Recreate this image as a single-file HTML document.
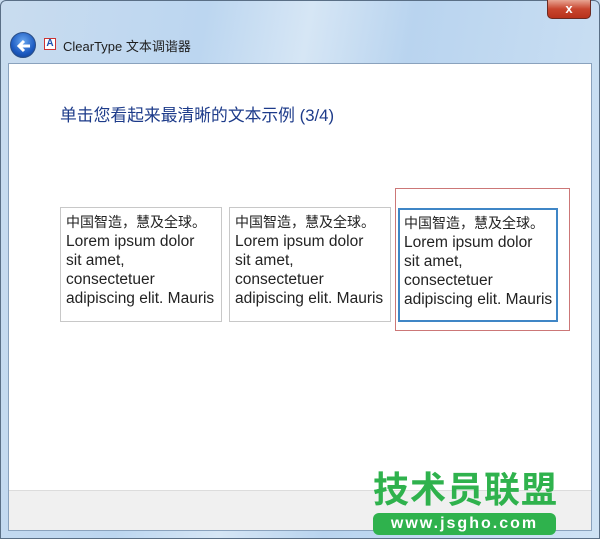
<!DOCTYPE html>
<html><head><meta charset="utf-8"><style>
*{margin:0;padding:0;box-sizing:border-box}
body{width:600px;height:539px;overflow:hidden;position:relative;font-family:"Liberation Sans","Noto Sans CJK SC",sans-serif;background:linear-gradient(100deg,#c9dcef 0%,#bcd6f0 30%,#d6e6f5 45%,#b9d4ef 60%,#cfe2f4 100%)}
.frame{position:absolute;left:0;top:0;width:600px;height:539px;border:1px solid #5a6f86;border-radius:6px 6px 0 0}
.close{position:absolute;left:547px;top:0;width:44px;height:19px;background:linear-gradient(#e8a593,#c8452e 50%,#b8321c);border:1px solid #6b2a22;border-top:none;border-radius:0 0 5px 5px;color:#fff;font-weight:bold;font-size:13px;text-align:center;line-height:18px}
.back{position:absolute;left:10px;top:32px;width:26px;height:26px;border-radius:50%;background:radial-gradient(circle at 50% 35%,#6aa8f0,#1d5bc2 60%,#0c3a8a);border:1px solid #2a4e86}
.back svg{position:absolute;left:4px;top:4px}
.ico{position:absolute;left:44px;top:38px;width:12px;height:12px;background:#fff;border:1px solid #c33;font-size:10px;line-height:10px;text-align:center;color:#1a4fb0;font-weight:bold}
.title{position:absolute;left:63px;top:36px;font-size:13px;color:#1e1e1e}
.content{position:absolute;left:8px;top:63px;width:584px;height:468px;background:#fff;border:1px solid #8aa2bd}
.bar{position:absolute;left:0;right:0;bottom:0;height:40px;background:#f0f0f0;border-top:1px solid #dcdcdc}
h1{position:absolute;left:51px;top:38px;font-size:16.8px;font-weight:normal;color:#1d3b8a;white-space:nowrap}
.box{position:absolute;top:143px;width:162px;height:115px;border:1px solid #c8c8c8;padding:5px 5px;font-size:15.5px;line-height:19px;color:#222;white-space:nowrap}
.sel{position:absolute;left:386px;top:124px;width:175px;height:143px;border:1px solid #c77}
.box.s{border:2px solid #3f86c6;padding:4px 4px}
.wm{position:absolute;left:373px;top:470px;font-size:36px;font-weight:bold;color:#2fb24d;letter-spacing:1px;line-height:40px}
.wm2{position:absolute;left:373px;top:513px;width:183px;height:22px;background:#2fb24d;border-radius:6px;color:#fff;font-size:16px;font-weight:bold;text-align:center;line-height:22px;letter-spacing:2px}
</style></head><body>
<div class="frame"></div>
<div class="close">x</div>
<div class="back"><svg width="18" height="18" viewBox="0 0 18 18"><path d="M15 9H4M9 4L4 9l5 5" stroke="#fff" stroke-width="3" fill="none"/></svg></div>
<div class="ico">A</div>
<div class="title">ClearType 文本调谐器</div>
<div class="content">
<h1>单击您看起来最清晰的文本示例 (3/4)</h1>
<div class="box" style="left:51px"><span style="font-size:14px">中国智造，慧及全球。</span><br>Lorem ipsum dolor<br>sit amet,<br>consectetuer<br>adipiscing elit. Mauris</div>
<div class="box" style="left:220px"><span style="font-size:14px">中国智造，慧及全球。</span><br>Lorem ipsum dolor<br>sit amet,<br>consectetuer<br>adipiscing elit. Mauris</div>
<div class="sel"></div>
<div class="box s" style="left:389px;width:160px;top:144px;height:114px"><span style="font-size:14px">中国智造，慧及全球。</span><br>Lorem ipsum dolor<br>sit amet,<br>consectetuer<br>adipiscing elit. Mauris</div>
<div class="bar"></div>
</div>
<div class="wm">技术员联盟</div>
<div class="wm2">www.jsgho.com</div>
</body></html>
